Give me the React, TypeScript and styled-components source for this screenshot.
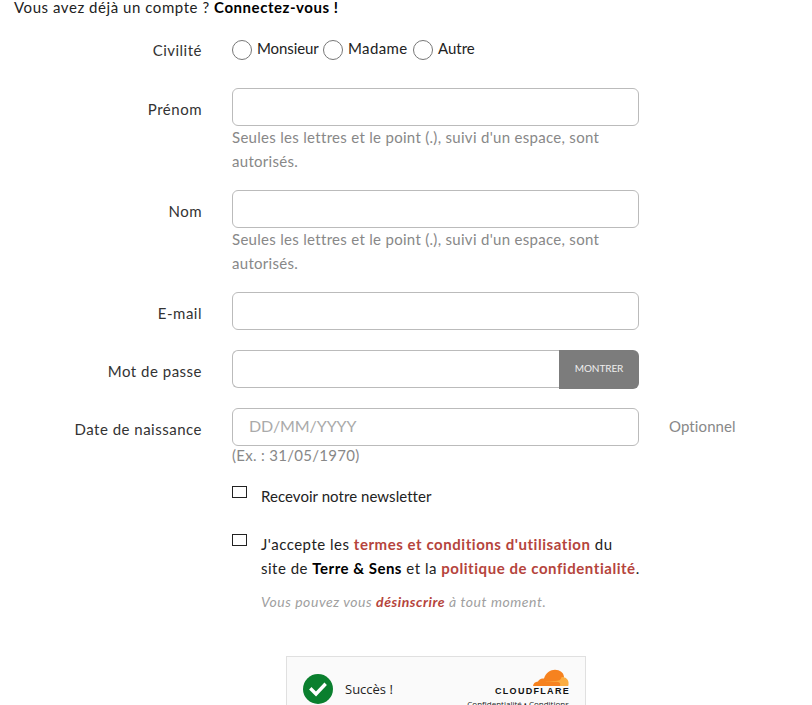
import React from "react";
import styled, { createGlobalStyle } from "styled-components";

const texts = {
  help: "Seules les lettres et le point (.), suivi d'un espace, sont autorisés.",
};

const GlobalStyle = createGlobalStyle`
  html, body {
    margin: 0;
    height: 705px;
    overflow: hidden;
    background: #fff;
  }
  body {
    font-family: "Lato", "Liberation Sans", sans-serif;
    font-size: 15px;
    color: #222;
  }
`;

const Page = styled.div`
  width: 812px;
  margin-top: -5px;
`;

const Intro = styled.p`
  margin: 0 0 18px 14px;
  line-height: 24px;
  letter-spacing: 0.55px;
  color: #222;
  strong {
    color: #000;
  }
`;

const Row = styled.div<{ $gap: number }>`
  display: grid;
  grid-template-columns: 202px 407px auto;
  column-gap: 30px;
  margin-bottom: ${(p) => p.$gap}px;
`;

const Label = styled.label<{ $top?: number }>`
  text-align: right;
  line-height: 24px;
  padding-top: ${(p) => p.$top ?? 9}px;
  letter-spacing: 0.5px;
  color: #333;
`;

const Radios = styled.div`
  display: flex;
  align-items: center;
  height: 24px;
  padding-top: 1px;
`;

const Radio = styled.span`
  box-sizing: border-box;
  flex: none;
  width: 20px;
  height: 20px;
  border: 1px solid #777;
  border-radius: 50%;
  margin-right: 5px;
`;

const RadioText = styled.span<{ $width: number; $spacing: number }>`
  width: ${(p) => p.$width}px;
  letter-spacing: ${(p) => p.$spacing}px;
  white-space: nowrap;
  position: relative;
  top: -2px;
`;

const Input = styled.input`
  display: block;
  box-sizing: border-box;
  width: 100%;
  height: 38px;
  border: 1px solid #bbb;
  border-radius: 6px;
  padding: 0 16px 3px;
  font: inherit;
  font-size: 16px;
  letter-spacing: -0.1px;
  background: #fff;
  outline: none;
  &::placeholder {
    color: #aaa;
  }
`;

const Help = styled.div`
  color: #888;
  line-height: 24px;
  letter-spacing: 0.3px;
  margin-top: -1px;
  margin-bottom: 1px;
`;

const Example = styled(Help)`
  line-height: 20px;
`;

const PasswordGroup = styled.div`
  display: flex;
`;

const PasswordInput = styled(Input)`
  flex: 1;
  border-radius: 6px 0 0 6px;
  border-right: 0;
`;

const ShowButton = styled.button`
  width: 80px;
  height: 39px;
  border: 0;
  border-radius: 0 6px 6px 0;
  background: #7c7c7c;
  color: #eee;
  font: inherit;
  font-size: 10px;
  letter-spacing: -0.1px;
  padding: 0 0 3px;
`;

const Optional = styled.span`
  color: #888;
  line-height: 36px;
  letter-spacing: 0.1px;
`;

const CheckRow = styled.div<{ $gap: number }>`
  display: grid;
  grid-template-columns: 15px 1fr;
  column-gap: 14px;
  width: 407px;
  margin: 0 0 ${(p) => p.$gap}px 232px;
`;

const Check = styled.span`
  box-sizing: border-box;
  width: 15px;
  height: 12px;
  margin-top: 1px;
  border: 1px solid #222;
`;

const CheckText = styled.div<{ $spacing: number }>`
  line-height: 24px;
  letter-spacing: ${(p) => p.$spacing}px;
  white-space: nowrap;
  margin-top: -1px;
  margin-bottom: 1px;
  color: #222;
  strong {
    color: #000;
  }
`;

const RedLink = styled.a`
  color: #b5443c;
  font-weight: 700;
  letter-spacing: 0.55px;
`;

const Note = styled.p`
  margin: 10px 0 0;
  font-style: italic;
  font-size: 14px;
  line-height: 24px;
  letter-spacing: 0.55px;
  color: #a0a0a0;
`;

const Turnstile = styled.div`
  box-sizing: border-box;
  display: flex;
  align-items: flex-start;
  width: 300px;
  height: 65px;
  margin: 0 0 0 286px;
  padding: 17px 16px 0 16px;
  border: 1px solid #e0e0e0;
  background: #fafafa;
  font-family: "Open Sans", "Noto Sans", sans-serif;
`;

const SuccessText = styled.span`
  margin-left: 12px;
  font-size: 13px;
  line-height: 30px;
  color: #232323;
`;

const Brand = styled.div`
  margin-left: auto;
  display: flex;
  flex-direction: column;
  align-items: flex-end;
  margin-top: -5px;
`;

const BrandName = styled.span`
  font-family: "Liberation Sans", sans-serif;
  font-size: 9px;
  font-weight: 700;
  line-height: 10px;
  letter-spacing: 1.3px;
  margin-right: -1px;
  color: #111;
`;

const BrandLinks = styled.span`
  margin-top: 2px;
  font-size: 8px;
  line-height: 11px;
  color: #232323;
  white-space: nowrap;
`;

const CheckBadge = () => (
  <svg width="30" height="30" viewBox="0 0 30 30">
    <circle cx="15" cy="15" r="15" fill="#0a7f2e" />
    <path
      d="M8.500 15.500l4.500 4.500 8.500-9"
      fill="none"
      stroke="#fff"
      strokeWidth="3.4"
      strokeLinecap="square"
    />
  </svg>
);

const CloudLogo = () => (
  <svg width="36" height="17" viewBox="0 0 36 20" preserveAspectRatio="none">
    <path
      d="M0 20c.3-3 2.200-5 5-5.200.7-2.700 3.300-4.300 6-3.600C12.500 5 17.500 1 22 1c5 0 8.500 3.500 9 8-.5 3-2 7-3 11z"
      fill="#f6821f"
    />
    <path
      d="M27 20c.5-2 .2-3.400-1-4.400-1-.7-8-.6-14-.5 5-.7 13-1 14.500-1.800 1.200-.8 1.800-2.300 2-3.800 3.800-.3 6.500 2.500 7 6 .2 1.700 0 3.300-.3 4.500z"
      fill="#fbad41"
    />
  </svg>
);

export default function App() {
  return (
    <>
      <GlobalStyle />
      <Page>
        <Intro>
          Vous avez déjà un compte ? <strong>Connectez-vous !</strong>
        </Intro>
        <Row $gap={26}>
          <Label $top={1}>Civilité</Label>
          <Radios>
            <Radio />
            <RadioText $width={66} $spacing={-0.1}>Monsieur</RadioText>
            <Radio />
            <RadioText $width={65} $spacing={0.4}>Madame</RadioText>
            <Radio />
            <RadioText $width={40} $spacing={0}>Autre</RadioText>
          </Radios>
        </Row>
        <Row $gap={16}>
          <Label>Prénom</Label>
          <div>
            <Input />
            <Help>{texts.help}</Help>
          </div>
        </Row>
        <Row $gap={16}>
          <Label>Nom</Label>
          <div>
            <Input />
            <Help>{texts.help}</Help>
          </div>
        </Row>
        <Row $gap={20}>
          <Label>E-mail</Label>
          <Input />
        </Row>
        <Row $gap={19}>
          <Label>Mot de passe</Label>
          <PasswordGroup>
            <PasswordInput />
            <ShowButton>MONTRER</ShowButton>
          </PasswordGroup>
        </Row>
        <Row $gap={19}>
          <Label>Date de naissance</Label>
          <div>
            <Input placeholder="DD/MM/YYYY" />
            <Example>(Ex. : 31/05/1970)</Example>
          </div>
          <Optional>Optionnel</Optional>
        </Row>
        <CheckRow $gap={24}>
          <Check />
          <CheckText $spacing={0.05}>Recevoir notre newsletter</CheckText>
        </CheckRow>
        <CheckRow $gap={41}>
          <Check />
          <CheckText $spacing={0.5}>
            J'accepte les <RedLink>termes et conditions d'utilisation</RedLink> du
            <br />
            site de <strong>Terre &amp; Sens</strong> et la{" "}
            <RedLink>politique de confidentialité</RedLink>.
            <Note>
              Vous pouvez vous <RedLink>désinscrire</RedLink> à tout moment.
            </Note>
          </CheckText>
        </CheckRow>
        <Turnstile>
          <CheckBadge />
          <SuccessText>Succès !</SuccessText>
          <Brand>
            <CloudLogo />
            <BrandName>CLOUDFLARE</BrandName>
            <BrandLinks>Confidentialité • Conditions</BrandLinks>
          </Brand>
        </Turnstile>
      </Page>
    </>
  );
}
